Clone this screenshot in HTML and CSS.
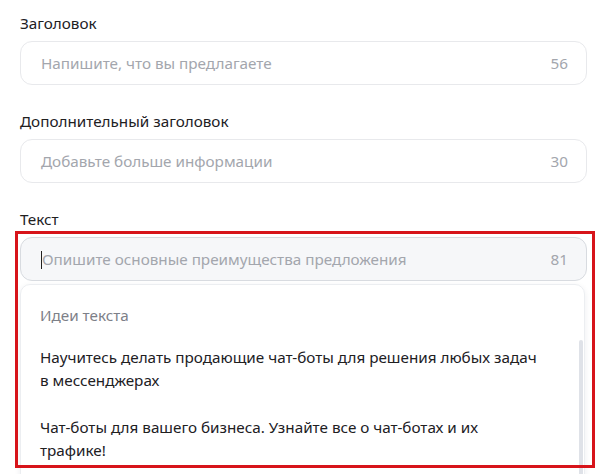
FILE: index.html
```html
<!DOCTYPE html>
<html lang="ru">
<head>
<meta charset="UTF-8">
<title>Объявление</title>
<link rel="stylesheet" href="styles.css">
</head>
<body>
<div class="form">
  <div class="field">
    <div class="label">Заголовок</div>
    <div class="input">
      <span class="placeholder">Напишите, что вы предлагаете</span>
      <span class="counter">56</span>
    </div>
  </div>
  <div class="field">
    <div class="label">Дополнительный заголовок</div>
    <div class="input">
      <span class="placeholder">Добавьте больше информации</span>
      <span class="counter">30</span>
    </div>
  </div>
  <div class="field">
    <div class="label">Текст</div>
    <div class="input focused">
      <span class="placeholder"><span class="caret"></span>Опишите основные преимущества предложения</span>
      <span class="counter">81</span>
    </div>
    <div class="suggest">
      <div class="suggest-title">Идеи текста</div>
      <div class="suggest-item">Научитесь делать продающие чат-боты для решения любых задач в мессенджерах</div>
      <div class="suggest-item">Чат-боты для вашего бизнеса. Узнайте все о чат-ботах и их трафике!</div>
      <div class="scroll-thumb"></div>
    </div>
  </div>
</div>
<div class="highlight"></div>
</body>
</html>
```

FILE: styles.css
```css
body {
  margin: 0;
  background-color: #fff;
  font-family: "Noto Sans", Arial, sans-serif;
  font-size: 15.25px;
  color: #21201f;
  height: 474px;
  overflow: hidden;
}
.form {
  padding: 13px 13px 0 20px;
  display: flex;
  flex-direction: column;
  gap: 26px;
}
.field {
  position: relative;
}
.label {
  line-height: 20px;
  margin-bottom: 8px;
}
.input {
  display: flex;
  justify-content: space-between;
  align-items: center;
  height: 42px;
  padding: 0 18px 0 20px;
  border: 1px solid #e8e9ec;
  border-radius: 12px;
  color: #a3a6ad;
}
.input.focused {
  background-color: #f6f7f9;
  border-color: #d8dbe0;
}
.caret {
  display: inline-block;
  width: 1px;
  height: 18px;
  background-color: #21201f;
  vertical-align: -4px;
}
.suggest {
  position: relative;
  margin-top: 3px;
  width: 565px;
  height: 200px;
  border: 1px solid #eceef1;
  border-radius: 10px;
  box-shadow: 0 2px 6px rgba(30, 40, 60, 0.08);
  padding: 19px 20px 0 19px;
  box-sizing: border-box;
  overflow: hidden;
}
.suggest-title {
  line-height: 22px;
  color: #7d8088;
  margin-bottom: 20px;
}
.suggest-item {
  max-width: 500px;
  line-height: 23px;
  margin-bottom: 24px;
}
.scroll-thumb {
  position: absolute;
  right: 1px;
  top: 55px;
  width: 4px;
  height: 200px;
  border-radius: 2px;
  background-color: #dfe2e8;
}
.highlight {
  position: absolute;
  left: 15px;
  top: 231px;
  width: 574px;
  height: 231px;
  border: 3px solid #d7141a;
}
```
